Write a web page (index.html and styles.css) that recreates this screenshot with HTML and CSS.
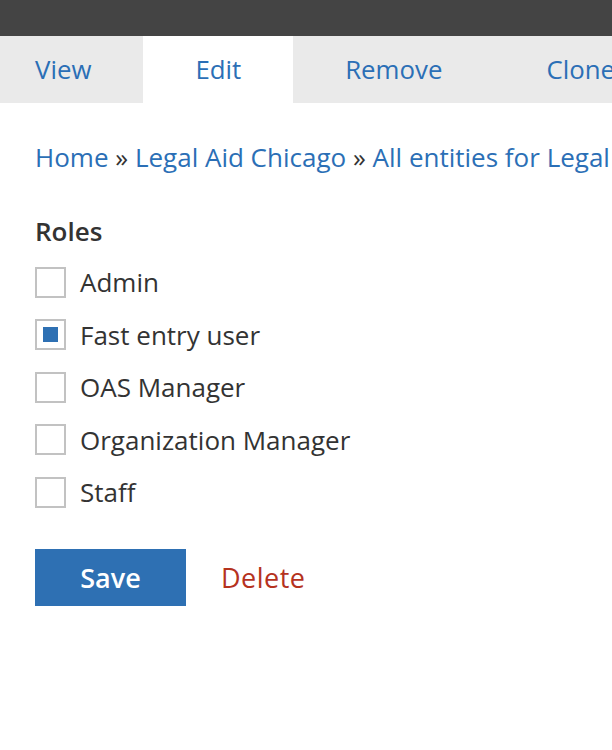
FILE: index.html
```html
<!DOCTYPE html>
<html lang="en">
<head>
<meta charset="utf-8">
<title>Edit roles</title>
<link rel="stylesheet" href="styles.css">
</head>
<body>
<div class="topbar"></div>
<nav class="tabs">
  <a class="tab first" href="#">View</a>
  <a class="tab active" href="#">Edit</a>
  <a class="tab" href="#">Remove</a>
  <a class="tab" href="#">Clone</a>
</nav>
<main class="content">
  <div class="breadcrumb">
    <a href="#">Home</a> <span class="sep">»</span> <a href="#">Legal Aid Chicago</a> <span class="sep">»</span> <a href="#">All entities for Legal Aid Chicago</a>
  </div>
  <form class="roles">
    <div class="label">Roles</div>
    <label class="row"><span class="box"></span><span>Admin</span></label>
    <label class="row"><span class="box checked"></span><span>Fast entry user</span></label>
    <label class="row"><span class="box"></span><span>OAS Manager</span></label>
    <label class="row"><span class="box"></span><span>Organization Manager</span></label>
    <label class="row"><span class="box"></span><span>Staff</span></label>
    <div class="actions">
      <button type="button" class="save">Save</button>
      <a class="delete" href="#">Delete</a>
    </div>
  </form>
</main>
</body>
</html>
```

FILE: styles.css
```css
html, body {
  margin: 0;
  padding: 0;
  background: #fff;
  overflow: hidden;
}
body {
  font-family: "Open Sans", "Liberation Sans", sans-serif;
  font-size: 26px;
  color: #333;
  width: 612px;
}
a {
  color: #2b6fb6;
  text-decoration: none;
}
.topbar {
  height: 36px;
  background: #444;
}
.tabs {
  display: flex;
  height: 67px;
  background: #eaeaea;
  white-space: nowrap;
  overflow: hidden;
}
.tab {
  display: flex;
  align-items: center;
  padding: 0 52px;
  line-height: 1;
  flex: none;
  font-size: 25.8px;
}
.tab.first {
  padding-left: 35px;
}
.tab.active {
  background: #fff;
}
.content {
  padding: 36px 35px 0;
}
.breadcrumb {
  line-height: 36px;
  white-space: nowrap;
  overflow: hidden;
  margin-right: -35px;
}
.breadcrumb .sep {
  color: #333;
}
.roles {
  margin-top: 38px;
}
.label {
  font-weight: 600;
  line-height: 36px;
  margin-bottom: 7px;
}
.row {
  display: flex;
  align-items: center;
  gap: 14px;
  height: 52.5px;
}
.box {
  box-sizing: border-box;
  width: 31px;
  height: 31px;
  border: 2px solid #c2c2c2;
  background: #fff;
  display: flex;
  align-items: center;
  justify-content: center;
  flex: none;
}
.box.checked::after {
  content: "";
  width: 15px;
  height: 15px;
  background: #2e70b3;
}
.actions {
  display: flex;
  align-items: center;
  gap: 35px;
  margin-top: 30px;
}
.save {
  width: 151px;
  height: 57px;
  border: none;
  background: #2e70b3;
  color: #fff;
  font-family: inherit;
  font-size: 27px;
  font-weight: 600;
  padding: 0;
}
.delete {
  color: #b5321e;
  font-size: 27px;
  letter-spacing: 0.5px;
}
```
